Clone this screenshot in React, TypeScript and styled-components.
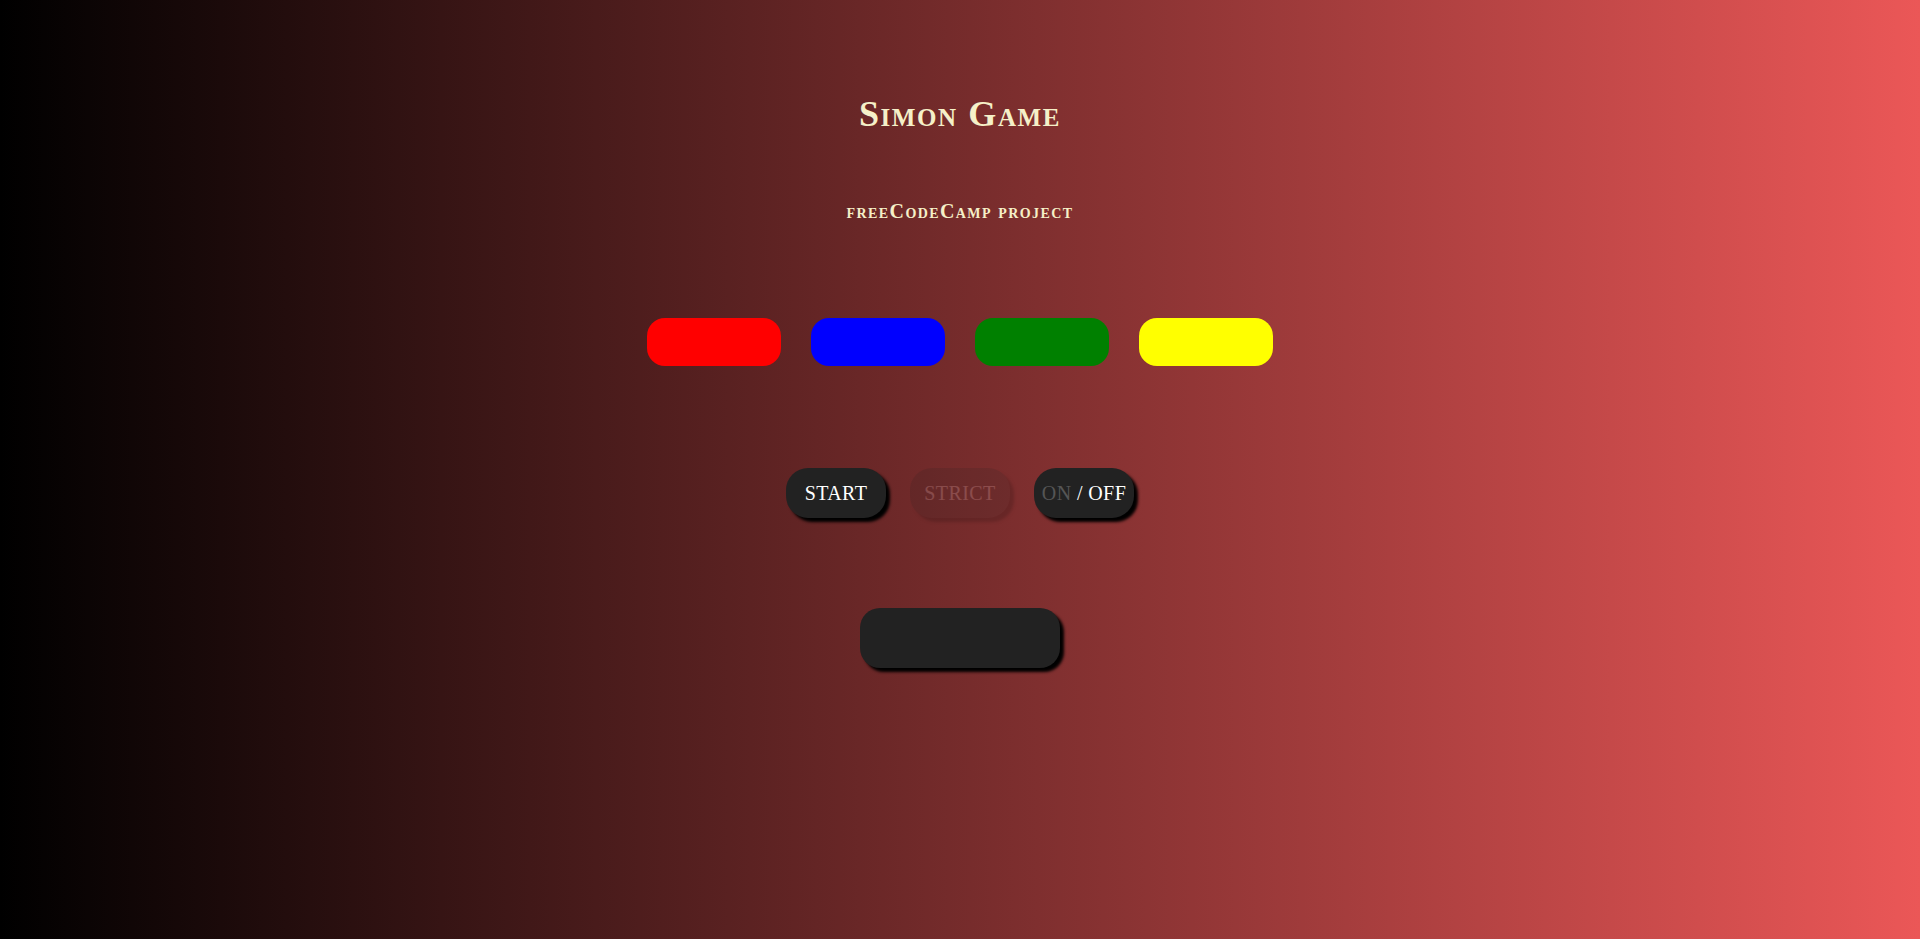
import React from "react";
import styled, { createGlobalStyle } from "styled-components";

const Global = createGlobalStyle`
  html, body { margin: 0; padding: 0; }
  body {
    min-height: 939px;
    background: linear-gradient(to right, #000000, #eb5757);
    font-family: "Liberation Serif", "DejaVu Serif", serif;
  }
`;

const Page = styled.main`
  display: flex;
  flex-direction: column;
  align-items: center;
  height: 939px;
  box-sizing: border-box;
  padding-top: 94px;
`;

const Title = styled.h1`
  margin: 0;
  font-size: 36px;
  letter-spacing: 1.6px;
  font-weight: bold;
  font-variant: small-caps;
  color: #f5f0c8;
  line-height: 40px;
`;

const Subtitle = styled.h2`
  margin: 66px 0 0;
  font-size: 20px;
  letter-spacing: 1.4px;
  font-weight: bold;
  font-variant: small-caps;
  color: #f5f0c8;
  line-height: 22px;
`;

const Pads = styled.div`
  display: flex;
  gap: 30px;
  margin-top: 96px;
`;

const Pad = styled.button<{ $c: string }>`
  width: 134px;
  height: 48px;
  border: none;
  border-radius: 18px;
  background: ${(p) => p.$c};
  padding: 0;
`;

const Controls = styled.div`
  display: flex;
  gap: 24px;
  margin-top: 102px;
`;

const Ctrl = styled.button<{ $dim?: boolean }>`
  width: 100px;
  height: 50px;
  border: none;
  border-radius: 22px;
  background: #222222;
  color: #ffffff;
  font-family: "Liberation Serif", "DejaVu Serif", serif;
  font-size: 20px;
  letter-spacing: 0.4px;
  box-shadow: 4px 4px 3px #000;
  opacity: ${(p) => (p.$dim ? 0.15 : 1)};
  padding: 0;
`;

const Off = styled.span`
  color: #555555;
`;

const Display = styled.div`
  width: 200px;
  height: 60px;
  margin-top: 90px;
  border-radius: 20px;
  background: #222222;
  box-shadow: 4px 4px 3px #000;
`;

export default function App() {
  return (
    <>
      <Global />
      <Page>
        <Title>Simon Game</Title>
        <Subtitle>freeCodeCamp project</Subtitle>
        <Pads>
          <Pad $c="#ff0000" />
          <Pad $c="#0000ff" />
          <Pad $c="#008000" />
          <Pad $c="#ffff00" />
        </Pads>
        <Controls>
          <Ctrl>START</Ctrl>
          <Ctrl $dim>STRICT</Ctrl>
          <Ctrl>
            <Off>ON</Off> / OFF
          </Ctrl>
        </Controls>
        <Display />
      </Page>
    </>
  );
}
